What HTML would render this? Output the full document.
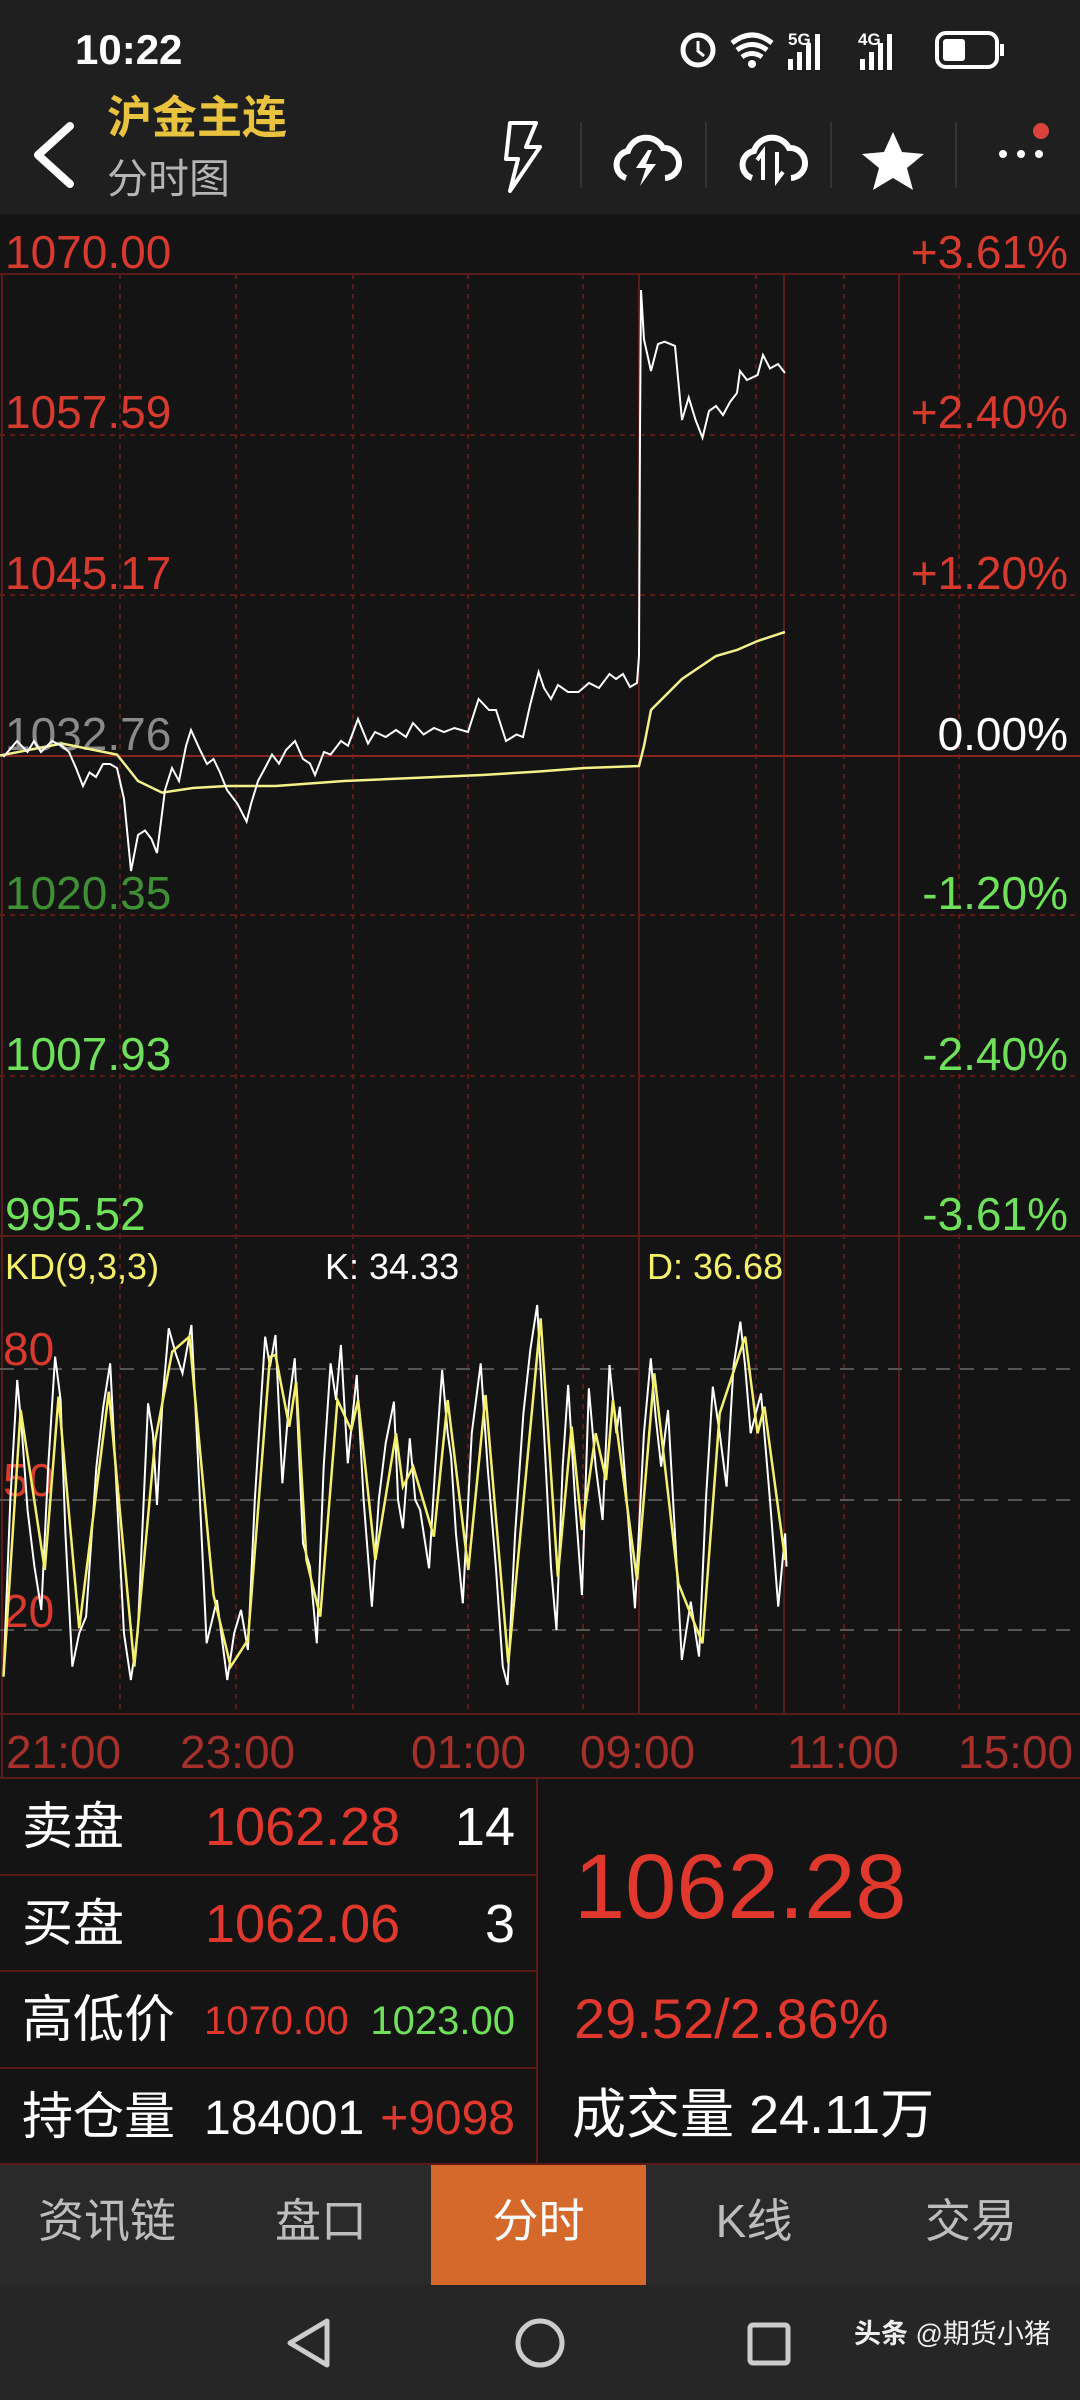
<!DOCTYPE html>
<html><head><meta charset="utf-8"><style>
*{margin:0;padding:0;box-sizing:border-box}
body{width:1080px;height:2400px;background:#141414;position:relative;overflow:hidden;font-family:"Liberation Sans","Noto Sans CJK SC",sans-serif;color:#fff}
.a{position:absolute;white-space:nowrap}
</style></head><body>
<!-- header -->
<div class="a" style="left:0;top:0;width:1080px;height:214px;background:#1f1f1f"></div>
<div class="a" style="left:75px;top:25px;font-size:42px;font-weight:bold;line-height:50px">10:22</div>
<svg class="a" style="left:670px;top:25px" width="345" height="50" viewBox="0 0 345 50">
 <circle cx="28" cy="25" r="15" fill="none" stroke="#fff" stroke-width="5"/><path d="M28 16v10l6 5" stroke="#fff" stroke-width="3" fill="none"/>
 <path d="M62 18q20-16 40 0M67 25q15-11 30 0M72 32q10-7 20 0" stroke="#fff" stroke-width="5" fill="none"/><circle cx="82" cy="39" r="4" fill="#fff"/>
 <text x="118" y="20" font-size="17" font-weight="bold" fill="#fff">5G</text>
 <rect x="118" y="34" width="5" height="11" fill="#fff"/><rect x="127" y="27" width="5" height="18" fill="#fff"/><rect x="136" y="18" width="5" height="27" fill="#fff"/><rect x="145" y="9" width="5" height="36" fill="#fff"/>
 <text x="188" y="20" font-size="17" font-weight="bold" fill="#fff">4G</text>
 <rect x="190" y="34" width="5" height="11" fill="#fff"/><rect x="199" y="27" width="5" height="18" fill="#fff"/><rect x="208" y="18" width="5" height="27" fill="#fff"/><rect x="217" y="9" width="5" height="36" fill="#fff"/>
 <rect x="267" y="8" width="60" height="34" rx="9" fill="none" stroke="#fff" stroke-width="4"/><rect x="273" y="14" width="22" height="22" rx="3" fill="#fff"/><rect x="330" y="19" width="4" height="12" fill="#fff"/>
</svg>
<svg class="a" style="left:28px;top:120px" width="50" height="70"><path d="M42 6L10 35l32 29" stroke="#fff" stroke-width="8" fill="none" stroke-linecap="round" stroke-linejoin="round"/></svg>
<div class="a" style="left:107px;top:90px;font-size:45px;font-weight:bold;color:#e9c23e;line-height:56px">沪金主连</div>
<div class="a" style="left:107px;top:153px;font-size:41px;color:#b5b5b5;line-height:52px">分时图</div>
<svg class="a" style="left:480px;top:110px" width="600" height="90" viewBox="480 110 600 90">
 <path d="M510 123h26l-10 24h14l-30 44 8-32h-12z" fill="none" stroke="#fff" stroke-width="4" stroke-linejoin="round"/>
 <line x1="581" y1="122" x2="581" y2="188" stroke="#333" stroke-width="2"/>
 <line x1="706" y1="122" x2="706" y2="188" stroke="#333" stroke-width="2"/>
 <line x1="831" y1="122" x2="831" y2="188" stroke="#333" stroke-width="2"/>
 <line x1="956" y1="122" x2="956" y2="188" stroke="#333" stroke-width="2"/>
 <path d="M626 178a14 14 0 0 1 2-27a19 19 0 0 1 35-3a14 14 0 0 1 2 30" fill="none" stroke="#fff" stroke-width="6"/>
 <path d="M648 150l-12 18h10l-6 18 16-22h-10l6-14z" fill="#fff"/>
 <path d="M752 178a14 14 0 0 1 2-27a19 19 0 0 1 35-3a14 14 0 0 1 2 30" fill="none" stroke="#fff" stroke-width="6"/>
 <path d="M763 180v-28l-6 8M777 152v28l6-8" fill="none" stroke="#fff" stroke-width="4"/>
 <path d="M893 132l9 20 22 2-17 14 6 22-20-12-20 12 6-22-17-14 22-2z" fill="#fff"/>
 <circle cx="1003" cy="154" r="4" fill="#fff"/><circle cx="1021" cy="154" r="4" fill="#fff"/><circle cx="1039" cy="154" r="4" fill="#fff"/>
 <circle cx="1041" cy="131" r="8" fill="#d9433c"/>
</svg>

<!-- chart -->
<svg class="a" style="left:0;top:0" width="1080" height="2400" viewBox="0 0 1080 2400" font-family="Liberation Sans, sans-serif">
 <g stroke="#5c1a18" stroke-width="2" stroke-dasharray="5 5">
  <line x1="120" y1="274" x2="120" y2="1714"/><line x1="236" y1="274" x2="236" y2="1714"/><line x1="353" y1="274" x2="353" y2="1714"/><line x1="468" y1="274" x2="468" y2="1714"/><line x1="583" y1="274" x2="583" y2="1714"/><line x1="756" y1="274" x2="756" y2="1714"/><line x1="844" y1="274" x2="844" y2="1714"/><line x1="959" y1="274" x2="959" y2="1714"/>
  <line x1="0" y1="435" x2="1080" y2="435"/><line x1="0" y1="595" x2="1080" y2="595"/><line x1="0" y1="915" x2="1080" y2="915"/><line x1="0" y1="1076" x2="1080" y2="1076"/>
 </g>
 <g stroke="#5c1a18" stroke-width="2">
  <line x1="639" y1="274" x2="639" y2="1714"/><line x1="784" y1="274" x2="784" y2="1714"/><line x1="899" y1="274" x2="899" y2="1714"/>
  <line x1="2" y1="274" x2="2" y2="1778"/>
  <line x1="0" y1="274" x2="1080" y2="274"/><line x1="0" y1="1236" x2="1080" y2="1236"/><line x1="0" y1="1714" x2="1080" y2="1714"/><line x1="0" y1="1778" x2="1080" y2="1778"/>
 </g>
 <line x1="0" y1="756" x2="1080" y2="756" stroke="#8a2420" stroke-width="2"/>
 <g stroke="#555" stroke-width="2" stroke-dasharray="14 10">
  <line x1="0" y1="1369" x2="1080" y2="1369"/><line x1="0" y1="1500" x2="1080" y2="1500"/><line x1="0" y1="1630" x2="1080" y2="1630"/>
 </g>
 <g font-size="46">
  <text x="5" y="268" fill="#d83a2e">1070.00</text>
  <text x="5" y="428" fill="#d83a2e">1057.59</text>
  <text x="5" y="589" fill="#d83a2e">1045.17</text>
  <text x="5" y="750" fill="#8a8a8a">1032.76</text>
  <text x="5" y="909" fill="#3f8f35">1020.35</text>
  <text x="5" y="1070" fill="#6ee05a">1007.93</text>
  <text x="5" y="1230" fill="#6ee05a">995.52</text>
  <g text-anchor="end">
  <text x="1068" y="268" fill="#d83a2e">+3.61%</text>
  <text x="1068" y="428" fill="#d83a2e">+2.40%</text>
  <text x="1068" y="589" fill="#d83a2e">+1.20%</text>
  <text x="1068" y="750" fill="#fff">0.00%</text>
  <text x="1068" y="909" fill="#6ee05a">-1.20%</text>
  <text x="1068" y="1070" fill="#6ee05a">-2.40%</text>
  <text x="1068" y="1230" fill="#6ee05a">-3.61%</text>
  </g>
 </g>
 <polyline fill="none" stroke="#f4f08a" stroke-width="2.5" points="0,755.5 62,743.5 117,754.6 138,781 162,792.6 193,788 227,786 275.5,786 344,781 482,775 537,771.6 585,768 639,766 644,746 651,710 682,679 716,656 737,650 757.6,641 785,632"/>
 <polyline fill="none" stroke="#fff" stroke-width="2" points="3.4,757 17,741 27.5,752 34,741 41,752 52,741 62,746 69,752 76,768 83,786 89.5,772.5 96,777 103,764 110,764 117,768 124,799 131,871 138,835 145,830.5 151.5,839 157,853 165,790 172,768 179,781 186,746 191,730 200,750 207,764 213.5,759 220,772.5 227,790 237.6,804 246.6,821.6 251,804 258,781 265,768 272,754.6 279,763.6 286,750 295,741 303,759 310,763.6 315,775 324,752 330.6,754.6 341,741 348,745.7 358,719 368,743.5 375,732 385.7,737 396,730 406,737 413,723 423.6,734.5 434,728 444,732 454.5,728 468,732 478.6,699 489,710 496,710 506,741 516.5,734.5 523,737 530,705.5 538.6,672 544,688 551,699 558,685 568,692 578.5,692 589,683 599,688 609.5,674 616,679 623,674 630,687 637,683 639,656 640,433 641,290 644,339.5 651,371 658,344 664.6,341.7 675,346 682,420 688.7,397.5 695.6,420 702.5,437.7 709,411 716,406 723,415 730,402 737,393 740,371 747,380 757.6,375 763,355 770,368.5 778,364 785,373"/>
 <g font-size="36">
  <text x="5" y="1279" fill="#f4f06a">KD(9,3,3)</text>
  <text x="325" y="1279" fill="#fff">K: 34.33</text>
  <text x="647" y="1279" fill="#f4f06a">D: 36.68</text>
 </g>
 <g font-size="46" fill="#d83a2e">
  <text x="3" y="1365">80</text><text x="3" y="1496">50</text><text x="3" y="1627">20</text>
 </g>
 <g transform="translate(0 1200) scale(0.6887 0.3333)">
  <polyline vector-effect="non-scaling-stroke" fill="none" stroke="#fff" stroke-width="2" points="5,1430 15,900 25,540 32,700 40,930 50,1100 60,1230 70,800 80,470 88,600 95,1000 105,1400 115,1300 125,1250 140,800 150,620 160,490 170,900 180,1300 190,1440 200,1300 215,610 222,700 228,915 236,600 245,385 255,460 265,520 278,375 288,800 300,1330 315,1200 330,1440 340,1300 350,1230 360,1350 370,900 385,410 392,500 400,405 410,850 420,600 428,475 440,1030 450,1100 460,1330 470,800 480,490 488,600 495,435 505,790 518,525 528,900 540,1220 550,900 560,730 572,605 578,900 585,985 595,715 603,900 610,930 623,1105 632,800 642,510 650,700 655,770 662,1000 672,1210 685,700 698,490 708,800 720,1100 730,1400 737,1455 748,1000 760,640 770,450 780,315 790,700 800,1100 808,1290 817,800 825,555 835,900 845,1185 855,565 865,800 875,960 885,495 895,700 900,620 910,900 922,1225 935,700 945,475 952,650 960,800 970,630 980,1000 990,1380 1003,1205 1015,1370 1025,900 1035,560 1045,700 1055,860 1065,500 1075,365 1082,500 1090,700 1105,580 1118,900 1130,1220 1140,1000 1142,1100"/>
  <polyline vector-effect="non-scaling-stroke" fill="none" stroke="#f4f06a" stroke-width="2.5" points="5,1430 30,630 65,1110 85,590 115,1285 158,575 195,1400 225,725 250,455 275,410 310,1185 335,1400 360,1320 392,470 400,465 420,680 430,545 445,1080 465,1250 490,600 510,690 520,600 545,1080 575,700 585,860 600,800 630,1010 650,600 680,1110 705,585 738,1390 785,355 810,1130 830,680 845,990 865,700 880,840 890,600 925,1140 950,520 985,1150 1020,1330 1045,640 1082,410 1100,700 1110,620 1140,1080"/>
 </g>
 <g font-size="46" fill="#a8302a">
  <text x="6" y="1768">21:00</text><text x="180" y="1768">23:00</text><text x="411" y="1768">01:00</text><text x="580" y="1768">09:00</text><text x="787" y="1768">11:00</text><text x="958" y="1768">15:00</text>
 </g>
 <!-- table -->
 <g stroke="#5c1a18" stroke-width="2">
  <line x1="537" y1="1778" x2="537" y2="2164"/><line x1="0" y1="1875" x2="537" y2="1875"/><line x1="0" y1="1971" x2="537" y2="1971"/><line x1="0" y1="2068" x2="537" y2="2068"/><line x1="0" y1="2164" x2="1080" y2="2164"/>
 </g>
</svg>
<div class="a" style="left:22px;top:1797px;font-size:51px;line-height:60px">卖盘</div>
<div class="a" style="left:22px;top:1894px;font-size:51px;line-height:60px">买盘</div>
<div class="a" style="left:22px;top:1990px;font-size:51px;line-height:60px">高低价</div>
<div class="a" style="left:22px;top:2087px;font-size:51px;line-height:60px">持仓量</div>
<div class="a" style="left:205px;top:1797px;font-size:54px;line-height:60px;color:#e0382c">1062.28</div>
<div class="a" style="left:205px;top:1894px;font-size:54px;line-height:60px;color:#e0382c">1062.06</div>
<div class="a" style="right:565px;top:1797px;font-size:54px;line-height:60px">14</div>
<div class="a" style="right:565px;top:1894px;font-size:54px;line-height:60px">3</div>
<div class="a" style="left:204px;top:1996px;font-size:40px;line-height:50px;color:#e0382c">1070.00</div>
<div class="a" style="right:565px;top:1996px;font-size:40px;line-height:50px;color:#6ee05a">1023.00</div>
<div class="a" style="left:204px;top:2091px;font-size:48px;line-height:56px">184001</div>
<div class="a" style="right:565px;top:2091px;font-size:48px;line-height:56px;color:#e0382c">+9098</div>
<div class="a" style="left:574px;top:1835px;font-size:92px;line-height:104px;color:#e0382c">1062.28</div>
<div class="a" style="left:574px;top:1987px;font-size:56px;line-height:64px;color:#e0382c">29.52/2.86%</div>
<div class="a" style="left:572px;top:2085px;font-size:54px;line-height:60px">成交量 24.11万</div>
<!-- tabs -->
<div class="a" style="left:0;top:2165px;width:1080px;height:120px;background:#2a2a2a"></div>
<div class="a" style="left:431px;top:2165px;width:215px;height:120px;background:#d5692b"></div>
<div class="a" style="left:0;top:2194px;width:214px;text-align:center;font-size:46px;line-height:54px;color:#bdbdbd">资讯链</div>
<div class="a" style="left:214px;top:2194px;width:214px;text-align:center;font-size:46px;line-height:54px;color:#bdbdbd">盘口</div>
<div class="a" style="left:431px;top:2194px;width:215px;text-align:center;font-size:46px;line-height:54px;color:#fff">分时</div>
<div class="a" style="left:647px;top:2194px;width:214px;text-align:center;font-size:46px;line-height:54px;color:#bdbdbd">K线</div>
<div class="a" style="left:864px;top:2194px;width:214px;text-align:center;font-size:46px;line-height:54px;color:#bdbdbd">交易</div>
<!-- nav -->
<div class="a" style="left:0;top:2285px;width:1080px;height:115px;background:#262626"></div>
<svg class="a" style="left:0;top:2285px" width="1080" height="115">
 <path d="M327 36L290 58l37 22z" fill="none" stroke="#ccc" stroke-width="5" stroke-linejoin="round"/>
 <circle cx="540" cy="58" r="22" fill="none" stroke="#ccc" stroke-width="5"/>
 <rect x="750" y="40" width="38" height="38" rx="3" fill="none" stroke="#ccc" stroke-width="5"/>
</svg>
<div class="a" style="left:854px;top:2317px;font-size:27px;line-height:34px;color:#eee"><b>头条</b> @期货小猪</div>
</body></html>
